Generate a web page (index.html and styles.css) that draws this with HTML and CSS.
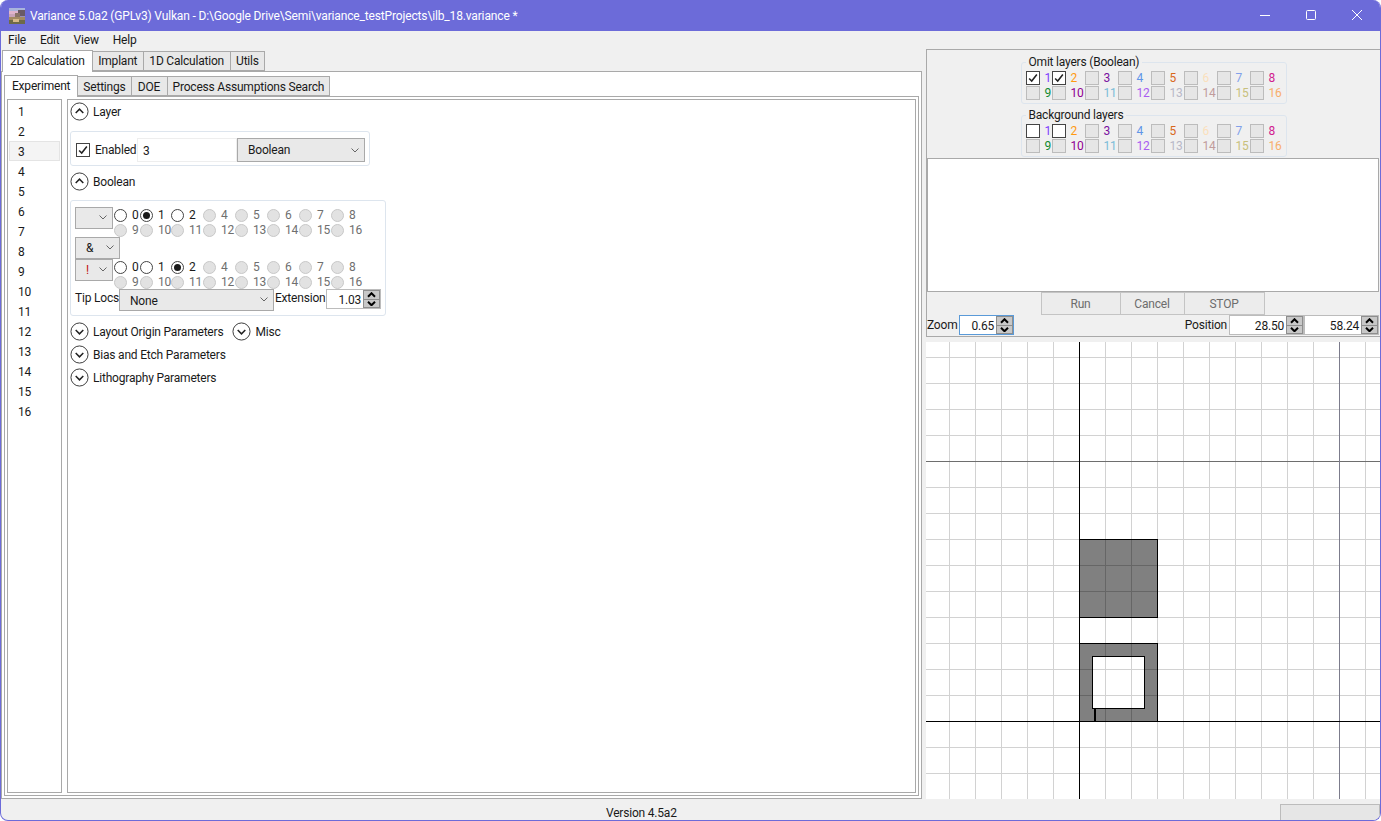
FILE: index.html

```html
<!DOCTYPE html>
<html lang="en">
<head>
	<meta charset="utf-8">
	<title>Variance 5.0a2</title>
	<link rel="stylesheet" href="styles.css">
</head>
<body>
<div class="window">
	<header class="titlebar">
		<svg class="app-icon" width="16" height="16" viewBox="0 0 16 16" shape-rendering="crispEdges">
			<rect width="16" height="16" fill="#9a8fb8"/>
			<rect width="16" height="3" fill="#a9b4dc"/>
			<rect y="3" width="9" height="3" fill="#e0b4cc"/>
			<rect x="9" y="2" width="7" height="6" fill="#6a5a66"/>
			<rect y="6" width="6" height="3" fill="#c9a3b8"/>
			<rect x="6" y="5" width="5" height="5" fill="#8a7468"/>
			<rect y="9" width="16" height="3" fill="#a38a62"/>
			<rect y="12" width="16" height="4" fill="#6e6a48"/>
			<rect x="4" y="11" width="6" height="3" fill="#d6b88a"/>
		</svg>
		<span class="title-text">Variance 5.0a2 (GPLv3) Vulkan - D:\Google Drive\Semi\variance_testProjects\ilb_18.variance *</span>
		<div class="caption">
			<svg width="46" height="31" viewBox="0 0 46 31"><path d="M18 15.5 H28" stroke="#fff"/></svg>
			<svg width="46" height="31" viewBox="0 0 46 31"><rect x="18.5" y="10.5" width="9" height="9" rx="1" fill="none" stroke="#fff"/></svg>
			<svg width="46" height="31" viewBox="0 0 46 31"><path d="M18 10 L28 20 M28 10 L18 20" stroke="#fff"/></svg>
		</div>
	</header>
	<nav class="menubar">
		<span>File</span><span>Edit</span><span>View</span><span>Help</span>
	</nav>
	<div class="workarea">
		<section class="left">
			<div class="tabs outer-tabs">
				<span class="tab on">2D Calculation</span><span class="tab">Implant</span><span class="tab">1D Calculation</span><span class="tab">Utils</span>
			</div>
			<div class="tabpage outer-page">
				<div class="tabs inner-tabs">
					<span class="tab on">Experiment</span><span class="tab">Settings</span><span class="tab doe-tab">DOE</span><span class="tab">Process Assumptions Search</span>
				</div>
				<div class="tabpage inner-page">
					<ul class="layer-list">
						<li>1</li><li>2</li><li class="sel">3</li><li>4</li><li>5</li><li>6</li><li>7</li><li>8</li>
						<li>9</li><li>10</li><li>11</li><li>12</li><li>13</li><li>14</li><li>15</li><li>16</li>
					</ul>
					<div class="settings">
						<div class="expander"><svg class="exp-btn" viewBox="0 0 20 20"><circle cx="10" cy="10" r="9" /><path d="M6 11.5 L10 7.5 L14 11.5"/></svg><span>Layer</span></div>
						<div class="group layer-group">
							<span class="check on"><svg viewBox="0 0 14 14"><path d="M2.5 7.5 L5.5 10.5 L11.5 3"/></svg></span>
							<span class="enabled">Enabled</span>
							<span class="textbox name-box">3</span>
							<span class="combo type-combo">Boolean<svg class="chev" viewBox="0 0 8 5"><path d="M.5 .5 L4 4 L7.5 .5"/></svg></span>
						</div>
						<div class="expander bool-head"><svg class="exp-btn" viewBox="0 0 20 20"><circle cx="10" cy="10" r="9" /><path d="M6 11.5 L10 7.5 L14 11.5"/></svg><span>Boolean</span></div>
						<div class="group bool-group">
							<div class="bool-row">
								<span class="combo small-combo"><svg class="chev" viewBox="0 0 8 5"><path d="M.5 .5 L4 4 L7.5 .5"/></svg></span>
								<div class="radios">
									<label><i class="radio"></i>0</label><label><i class="radio picked"></i>1</label><label><i class="radio"></i>2</label><label class="off"><i class="radio"></i>4</label><label class="off"><i class="radio"></i>5</label><label class="off"><i class="radio"></i>6</label><label class="off"><i class="radio"></i>7</label><label class="off"><i class="radio"></i>8</label>
									<label class="off"><i class="radio"></i>9</label><label class="off"><i class="radio"></i>10</label><label class="off"><i class="radio"></i>11</label><label class="off"><i class="radio"></i>12</label><label class="off"><i class="radio"></i>13</label><label class="off"><i class="radio"></i>14</label><label class="off"><i class="radio"></i>15</label><label class="off"><i class="radio"></i>16</label>
								</div>
							</div>
							<span class="combo op-combo">&amp;<svg class="chev" viewBox="0 0 8 5"><path d="M.5 .5 L4 4 L7.5 .5"/></svg></span>
							<div class="bool-row">
								<span class="combo small-combo not">!<svg class="chev" viewBox="0 0 8 5"><path d="M.5 .5 L4 4 L7.5 .5"/></svg></span>
								<div class="radios">
									<label><i class="radio"></i>0</label><label><i class="radio"></i>1</label><label><i class="radio picked"></i>2</label><label class="off"><i class="radio"></i>4</label><label class="off"><i class="radio"></i>5</label><label class="off"><i class="radio"></i>6</label><label class="off"><i class="radio"></i>7</label><label class="off"><i class="radio"></i>8</label>
									<label class="off"><i class="radio"></i>9</label><label class="off"><i class="radio"></i>10</label><label class="off"><i class="radio"></i>11</label><label class="off"><i class="radio"></i>12</label><label class="off"><i class="radio"></i>13</label><label class="off"><i class="radio"></i>14</label><label class="off"><i class="radio"></i>15</label><label class="off"><i class="radio"></i>16</label>
								</div>
							</div>
							<div class="tip-row">
								<span class="tip-label">Tip Locs</span>
								<span class="combo tip-combo">None<svg class="chev" viewBox="0 0 8 5"><path d="M.5 .5 L4 4 L7.5 .5"/></svg></span>
								<span class="ext-label">Extension</span>
								<span class="spin ext-spin"><b>1.03</b><i class="arrows"><svg viewBox="0 0 9 5"><path d="M1 4.5 L4.5 1 L8 4.5"/></svg><svg viewBox="0 0 9 5"><path d="M1 .5 L4.5 4 L8 .5"/></svg></i></span>
							</div>
						</div>
						<div class="expander-row">
							<div class="expander"><svg class="exp-btn" viewBox="0 0 20 20"><circle cx="10" cy="10" r="9" /><path d="M6 8.5 L10 12.5 L14 8.5"/></svg><span>Layout Origin Parameters</span></div>
							<div class="expander"><svg class="exp-btn" viewBox="0 0 20 20"><circle cx="10" cy="10" r="9" /><path d="M6 8.5 L10 12.5 L14 8.5"/></svg><span>Misc</span></div>
						</div>
						<div class="expander closed"><svg class="exp-btn" viewBox="0 0 20 20"><circle cx="10" cy="10" r="9" /><path d="M6 8.5 L10 12.5 L14 8.5"/></svg><span>Bias and Etch Parameters</span></div>
						<div class="expander closed"><svg class="exp-btn" viewBox="0 0 20 20"><circle cx="10" cy="10" r="9" /><path d="M6 8.5 L10 12.5 L14 8.5"/></svg><span>Lithography Parameters</span></div>
					</div>
				</div>
			</div>
		</section>
		<section class="right">
			<div class="controls">
				<div class="layer-box omit">
					<span class="legend">Omit layers (Boolean)</span>
					<div class="layer-grid">
						<label><i class="check on"><svg viewBox="0 0 14 14"><path d="M2.5 7.5 L5.5 10.5 L11.5 3"/></svg></i><span class="c1">1</span></label>
						<label><i class="check on"><svg viewBox="0 0 14 14"><path d="M2.5 7.5 L5.5 10.5 L11.5 3"/></svg></i><span class="c2">2</span></label>
						<label><i class="check off"></i><span class="c3">3</span></label>
						<label><i class="check off"></i><span class="c4">4</span></label>
						<label><i class="check off"></i><span class="c5">5</span></label>
						<label><i class="check off"></i><span class="c6">6</span></label>
						<label><i class="check off"></i><span class="c7">7</span></label>
						<label><i class="check off"></i><span class="c8">8</span></label>
						<label><i class="check off"></i><span class="c9">9</span></label>
						<label><i class="check off"></i><span class="c10">10</span></label>
						<label><i class="check off"></i><span class="c11">11</span></label>
						<label><i class="check off"></i><span class="c12">12</span></label>
						<label><i class="check off"></i><span class="c13">13</span></label>
						<label><i class="check off"></i><span class="c14">14</span></label>
						<label><i class="check off"></i><span class="c15">15</span></label>
						<label><i class="check off"></i><span class="c16">16</span></label>
					</div>
				</div>
				<div class="layer-box bg">
					<span class="legend">Background layers</span>
					<div class="layer-grid">
						<label><i class="check on"></i><span class="c1">1</span></label>
						<label><i class="check on"></i><span class="c2">2</span></label>
						<label><i class="check off"></i><span class="c3">3</span></label>
						<label><i class="check off"></i><span class="c4">4</span></label>
						<label><i class="check off"></i><span class="c5">5</span></label>
						<label><i class="check off"></i><span class="c6">6</span></label>
						<label><i class="check off"></i><span class="c7">7</span></label>
						<label><i class="check off"></i><span class="c8">8</span></label>
						<label><i class="check off"></i><span class="c9">9</span></label>
						<label><i class="check off"></i><span class="c10">10</span></label>
						<label><i class="check off"></i><span class="c11">11</span></label>
						<label><i class="check off"></i><span class="c12">12</span></label>
						<label><i class="check off"></i><span class="c13">13</span></label>
						<label><i class="check off"></i><span class="c14">14</span></label>
						<label><i class="check off"></i><span class="c15">15</span></label>
						<label><i class="check off"></i><span class="c16">16</span></label>
					</div>
				</div>
				<div class="output"></div>
				<div class="run-row">
					<span class="btn run">Run</span><span class="btn cancel">Cancel</span><span class="btn stop">STOP</span>
				</div>
				<div class="view-row">
					<span class="zoom-label">Zoom</span>
					<span class="spin zoom-spin"><b>0.65</b><i class="arrows"><svg viewBox="0 0 9 5"><path d="M1 4.5 L4.5 1 L8 4.5"/></svg><svg viewBox="0 0 9 5"><path d="M1 .5 L4.5 4 L8 .5"/></svg></i></span>
					<span class="pos-label">Position</span>
					<span class="spin pos-spin"><b>28.50</b><i class="arrows"><svg viewBox="0 0 9 5"><path d="M1 4.5 L4.5 1 L8 4.5"/></svg><svg viewBox="0 0 9 5"><path d="M1 .5 L4.5 4 L8 .5"/></svg></i></span>
					<span class="spin pos-spin"><b>58.24</b><i class="arrows"><svg viewBox="0 0 9 5"><path d="M1 4.5 L4.5 1 L8 4.5"/></svg><svg viewBox="0 0 9 5"><path d="M1 .5 L4.5 4 L8 .5"/></svg></i></span>
				</div>
			</div>
			<svg class="viewport" width="454" height="457" viewBox="926 342 454 457" shape-rendering="crispEdges">
				<rect x="926" y="342" width="454" height="457" fill="#fff"/>
				<g stroke="#d2d2d2">
					<path d="M949.5 342V799M975.5 342V799M1001.5 342V799M1027.5 342V799M1053.5 342V799M1105.5 342V799M1131.5 342V799M1157.5 342V799M1183.5 342V799M1209.5 342V799M1235.5 342V799M1261.5 342V799M1287.5 342V799M1313.5 342V799M1365.5 342V799"/>
					<path d="M926 357.5H1380M926 383.5H1380M926 409.5H1380M926 435.5H1380M926 487.5H1380M926 513.5H1380M926 539.5H1380M926 565.5H1380M926 591.5H1380M926 617.5H1380M926 643.5H1380M926 669.5H1380M926 695.5H1380M926 747.5H1380M926 773.5H1380"/>
				</g>
				<path d="M926 461.5H1380" stroke="#6e6e6e"/>
				<path d="M1339.5 342V799" stroke="#7c7c8c"/>
				<path d="M926 721.5H1380M1079.5 342V799" stroke="#000"/>
				<path d="M1080 540H1157V617H1080Z" fill="#808080"/>
				<path d="M1080 644H1157V721H1080Z M1092 656V709H1145V656Z" fill="#808080" fill-rule="evenodd"/>
				<path d="M1105.5 540V617M1131.5 540V617M1080 565.5H1157M1080 591.5H1157" stroke="#666"/>
				<path d="M1105.5 644V656M1131.5 644V656M1105.5 709V721M1131.5 709V721M1080 669.5H1092M1080 695.5H1092M1145 669.5H1157M1145 695.5H1157" stroke="#666"/>
				<g stroke="#000" fill="none">
					<path d="M1079.5 539.5H1157.5V617.5H1079.5Z"/>
					<path d="M1079.5 643.5H1157.5V721.5H1079.5Z"/>
					<path d="M1092.5 656.5H1144.5V708.5H1092.5Z"/>
				</g>
				<rect x="1094" y="709" width="2" height="12" fill="#000"/>
			</svg>
		</section>
	</div>
	<footer class="statusbar">
		<span class="version">Version 4.5a2</span>
		<span class="status-box"></span>
	</footer>
</div>
</body>
</html>
```

FILE: styles.css

```css
* {
	box-sizing: border-box;
}
html, body {
	height: 100%;
}
body {
	margin: 0;
	overflow: hidden;
	background: #fff;
	font-family: Roboto, "Noto Sans", sans-serif;
	font-size: 12px;
	letter-spacing: -.2px;
	color: #1a1a1a;
}
.window {
	width: 1381px;
	height: 821px;
	display: flex;
	flex-direction: column;
	background: #f0f0f0;
	border: 1px solid #6c6bd9;
	border-top: 0;
	border-radius: 8px;
	overflow: hidden;
}

/* title bar */
.titlebar {
	flex: none;
	height: 31px;
	margin: 0 -1px;
	display: flex;
	align-items: center;
	background: #6c6bd9;
	color: #fff;
	letter-spacing: -.15px;
}
.app-icon {
	margin-left: 9px;
	margin-right: 5px;
}
.title-text {
	flex: 1;
}
.caption {
	display: flex;
	margin-right: 1px;
}

.menubar {
	flex: none;
	height: 18px;
	display: flex;
	align-items: center;
	gap: 14px;
	padding-left: 7px;
}

.workarea {
	flex: 1;
	min-height: 0;
	display: flex;
	gap: 4px;
}
.left {
	width: 921px;
	display: flex;
	flex-direction: column;
}
.right {
	flex: 1;
	display: flex;
	flex-direction: column;
	gap: 5px;
	min-width: 0;
}

/* tabs */
.tabs {
	display: flex;
	align-items: flex-end;
	position: relative;
	z-index: 1;
	flex: none;
}
.tab {
	height: 20px;
	padding: 0 5.5px;
	line-height: 19px;
	background: #e8e8e8;
	border: 1px solid #a9a9a9;
	border-left-width: 0;
	white-space: nowrap;
}
.tab.on {
	height: 22px;
	padding: 0 7px;
	line-height: 20px;
	background: #fff;
	border-left-width: 1px;
	border-bottom: 0;
	margin-bottom: -1px;
}
.outer-tabs {
	height: 22px;
	padding-left: 1px;
}
.tabpage {
	background: #fff;
	border: 1px solid #a9a9a9;
}
.outer-page {
	flex: 1;
	min-height: 0;
	padding: 2px 2px 2px 2px;
	display: flex;
	flex-direction: column;
}
.inner-tabs {
	height: 22px;
}
.inner-tabs .tab {
	padding: 0 5px;
	line-height: 20px;
}
.inner-tabs .tab.on {
	padding: 0 7px;
	line-height: 21px;
}
.inner-tabs .doe-tab {
	width: 36px;
	text-align: center;
}
.inner-page {
	flex: 1;
	min-height: 0;
	display: flex;
	gap: 5px;
	padding: 2px 2px 2px 2px;
}

.layer-list {
	width: 55px;
	margin: 0;
	padding: 1px 1px;
	list-style: none;
	border: 1px solid #a9a9a9;
}
.layer-list li {
	height: 20px;
	line-height: 22px;
	padding-left: 9px;
}
.layer-list li.sel {
	background: #f4f4f4;
	border: 1px solid #e4e4e4;
	line-height: 20px;
	padding-left: 8px;
}

.settings {
	flex: 1;
	border: 1px solid #a9a9a9;
	padding: 2px 2px;
}
.expander {
	display: flex;
	align-items: center;
	gap: 4px;
	height: 19px;
	white-space: nowrap;
}
.exp-btn {
	width: 19px;
	height: 19px;
	flex: none;
}
.exp-btn circle {
	fill: #fff;
	stroke: #333;
	stroke-width: 1;
}
.exp-btn path {
	fill: none;
	stroke: #222;
	stroke-width: 1.6;
}
.group {
	border: 1px solid #dde5ee;
	border-radius: 3px;
}
.layer-group {
	width: 300px;
	height: 35px;
	margin-top: 10px;
	display: flex;
	align-items: center;
	padding: 3px 4px 0 5px;
}
.check {
	width: 14px;
	height: 14px;
	flex: none;
	display: block;
	background: #fff;
	border: 1px solid #444;
}
.check svg {
	display: block;
	width: 12px;
	height: 12px;
}
.check svg path {
	fill: none;
	stroke: #222;
	stroke-width: 1.8;
}
.check.off {
	background: #e6e6e6;
	border-color: #bcbcbc;
}
.enabled {
	width: 42px;
	margin-left: 5px;
	white-space: nowrap;
}
.textbox {
	width: 100px;
	height: 24px;
	background: #fff;
	border: 1px solid #eee;
	line-height: 24px;
	padding-left: 5px;
}
.combo {
	position: relative;
	display: block;
	flex: none;
	height: 22px;
	line-height: 20px;
	background: #e9e9e9;
	border: 1px solid #a9a9a9;
	padding-left: 10px;
}
.chev {
	position: absolute;
	right: 5px;
	top: 7px;
	width: 8px;
	height: 5px;
}
.chev path {
	fill: none;
	stroke: #666;
}
.type-combo {
	width: 128px;
	height: 24px;
	line-height: 22px;
}
.type-combo .chev {
	top: 9px;
}
.bool-head {
	margin-top: 6px;
}
.bool-group {
	width: 316px;
	height: 116px;
	margin-top: 9px;
	padding: 6px 4px 0 4px;
}
.bool-row {
	display: flex;
	height: 30px;
}
.small-combo {
	width: 38px;
}
.not {
	color: #c01010;
}
.op-combo {
	width: 45px;
}
.radios {
	display: grid;
	grid-template-columns: 26px 31px repeat(6, 32px);
	grid-auto-rows: 15px;
	margin-left: 1px;
	margin-top: 1px;
}
.radios label {
	display: flex;
	align-items: center;
	gap: 5px;
	height: 15px;
	line-height: 15px;
	white-space: nowrap;
}
.radios label.off {
	color: #6f6f6f;
}
.radio {
	position: relative;
	display: block;
	flex: none;
	width: 13px;
	height: 13px;
	background: #fff;
	border: 1px solid #444;
	border-radius: 50%;
}
.radios .off .radio {
	background: #e2e2e2;
	border-color: #c8c8c8;
}
.radio.picked::after {
	content: "";
	position: absolute;
	left: 2px;
	top: 2px;
	width: 7px;
	height: 7px;
	background: #1a1a1a;
	border-radius: 50%;
}
.tip-row {
	display: flex;
	align-items: flex-start;
	height: 22px;
}
.tip-label {
	width: 44px;
	line-height: 18px;
	white-space: nowrap;
}
.tip-combo {
	width: 155px;
	height: 22px;
	line-height: 22px;
}
.ext-label {
	width: 51px;
	margin-left: 1px;
	line-height: 18px;
	white-space: nowrap;
}
.spin {
	display: flex;
	flex: none;
	height: 20px;
	background: #fff;
	border: 1px solid #bcbcbc;
}
.spin b {
	flex: 1;
	font-weight: 400;
	text-align: right;
	padding-right: 2px;
	line-height: 20px;
}
.arrows {
	width: 17px;
	flex: none;
	display: flex;
	flex-direction: column;
	background: #c8c8c8;
	border: 1px solid #8e8e8e;
}
.arrows svg {
	flex: 1;
	min-height: 0;
	width: 100%;
	padding: 1px 3px;
}
.arrows svg + svg {
	border-top: 1px solid #8e8e8e;
}
.arrows path {
	fill: none;
	stroke: #000;
	stroke-width: 2;
}
.ext-spin {
	width: 55px;
}
.expander-row {
	display: flex;
	gap: 9px;
	margin-top: 6px;
}
.expander.closed {
	margin-top: 4px;
}

/* right hand side */
.controls {
	flex: none;
	height: 288px;
	display: flex;
	flex-direction: column;
	align-items: center;
	border: 1px solid #a9a9a9;
	border-right-width: 0;
	padding-top: 12px;
}
.layer-box {
	position: relative;
	flex: none;
	width: 266px;
	height: 42px;
	border: 1px solid #dde5ee;
	border-radius: 3px;
	padding: 7px 0 0 4px;
}
.layer-box.bg {
	margin-top: 11px;
}
.legend {
	position: absolute;
	left: 4px;
	top: -8px;
	background: #f0f0f0;
	padding: 0 3px;
	line-height: 14px;
}
.layer-grid {
	display: grid;
	grid-template-columns: 26px repeat(7, 33px);
	grid-auto-rows: 15px;
}
.layer-grid label {
	display: flex;
	align-items: center;
	gap: 5px;
	white-space: nowrap;
}
.c1 { color: #8040ff; }
.c2 { color: #ff9a10; }
.c3 { color: #7a10a0; }
.c4 { color: #5f95e8; }
.c5 { color: #d8681c; }
.c6 { color: #fbe0bc; }
.c7 { color: #82a0ea; }
.c8 { color: #d0208f; }
.c9 { color: #108a30; }
.c10 { color: #900090; }
.c11 { color: #7cbcd8; }
.c12 { color: #a95cf0; }
.c13 { color: #b8b8c8; }
.c14 { color: #c09c9c; }
.c15 { color: #c8c07c; }
.c16 { color: #f8ae6c; }
.output {
	align-self: stretch;
	flex: none;
	height: 134px;
	margin-top: 1px;
	margin-right: 1px;
	background: #fff;
	border: 1px solid #a9a9a9;
}
.run-row {
	display: flex;
	height: 23px;
	margin-right: 2px;
	color: #6d6d6d;
	flex: none;
}
.btn {
	background: #ececec;
	border: 1px solid #c4c4c4;
	text-align: center;
	line-height: 23px;
}
.run { width: 80px; }
.cancel { width: 64px; border-left-width: 0; }
.stop { width: 80px; border-left-width: 0; }
.view-row {
	align-self: stretch;
	display: flex;
	align-items: flex-start;
	height: 21px;
	padding-right: 1px;
	flex: none;
}
.zoom-label {
	width: 32px;
	line-height: 20px;
}
.zoom-spin {
	width: 55px;
	border-color: #5a9ad8;
}
.pos-label {
	margin-left: auto;
	margin-right: 2px;
	line-height: 20px;
}
.pos-spin {
	width: 75px;
}
.viewport {
	display: block;
	flex: none;
}

.statusbar {
	flex: none;
	height: 21px;
	display: flex;
	align-items: flex-end;
}
.version {
	margin-left: 605px;
}
.status-box {
	width: 100px;
	height: 16px;
	margin-left: auto;
	background: #e6e6e6;
	border: 1px solid #bcbcbc;
	border-bottom: 0;
}
```
